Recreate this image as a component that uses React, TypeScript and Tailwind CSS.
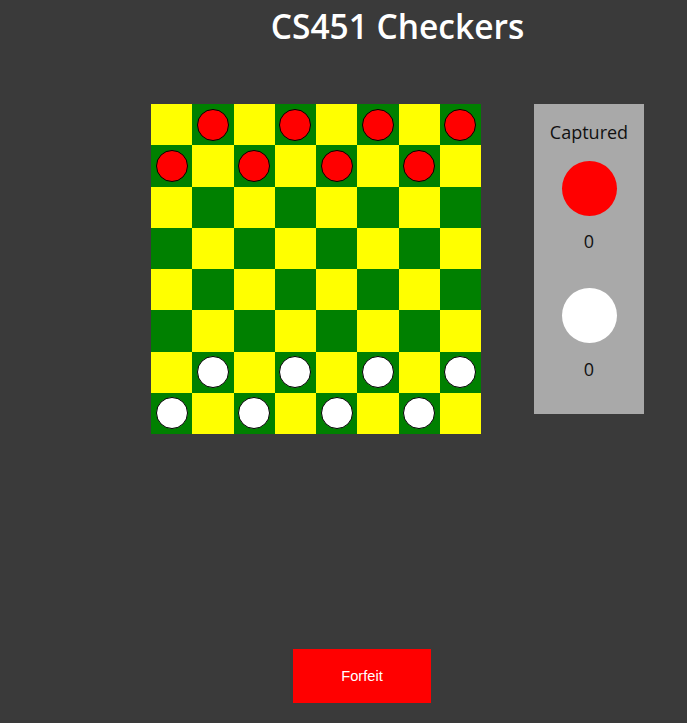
import React from "react";

const ROWS = [0, 1, 2, 3, 4, 5, 6, 7];

function pieceAt(r: number, c: number): "red" | "white" | null {
  if ((r + c) % 2 === 0) return null;
  if (r < 2) return "red";
  if (r > 5) return "white";
  return null;
}

function Board() {
  return (
    <div className="grid h-[330px] w-[330px] shrink-0 grid-cols-8 grid-rows-8">
      {ROWS.map((r) =>
        ROWS.map((c) => {
          const dark = (r + c) % 2 === 1;
          const p = pieceAt(r, c);
          return (
            <div
              key={`${r}-${c}`}
              className={`flex items-center justify-center ${dark ? "bg-[#008000]" : "bg-[#ffff00]"}`}
            >
              {p && (
                <span
                  className={`h-[32px] w-[32px] rounded-full border border-black ${
                    p === "red" ? "bg-[#ff0000]" : "bg-white"
                  }`}
                />
              )}
            </div>
          );
        })
      )}
    </div>
  );
}

function CapturedPanel() {
  return (
    <div className="flex h-[310px] w-[110px] shrink-0 flex-col items-center bg-[#a9a9a9] pt-[15px] text-[18px] leading-[26px] text-[#111]">
      <p>Captured</p>
      <span className="mt-[16px] h-[55px] w-[55px] rounded-full bg-[#ff0000]" />
      <p className="mt-[12px]">0</p>
      <span className="mt-[34px] h-[55px] w-[55px] rounded-full bg-white" />
      <p className="mt-[13px]">0</p>
    </div>
  );
}

export default function App() {
  return (
    <div
      className="min-h-[723px] bg-[#3a3a3a]"
      style={{ fontFamily: '"Open Sans", sans-serif' }}
    >
      <div className="ml-[151px] w-[493px]">
        <h1 className="pt-[4px] text-center text-[33.5px] leading-[44px] font-semibold text-white">
          CS451 Checkers
        </h1>
        <div className="mt-[56px] flex gap-[53px]">
          <Board />
          <CapturedPanel />
        </div>
      </div>
      <button
        className="mt-[215px] ml-[293px] h-[54px] w-[138px] bg-[#ff0000] text-[14.67px] text-white"
        style={{ fontFamily: '"Liberation Sans", Arial, sans-serif' }}
      >
        Forfeit
      </button>
    </div>
  );
}
